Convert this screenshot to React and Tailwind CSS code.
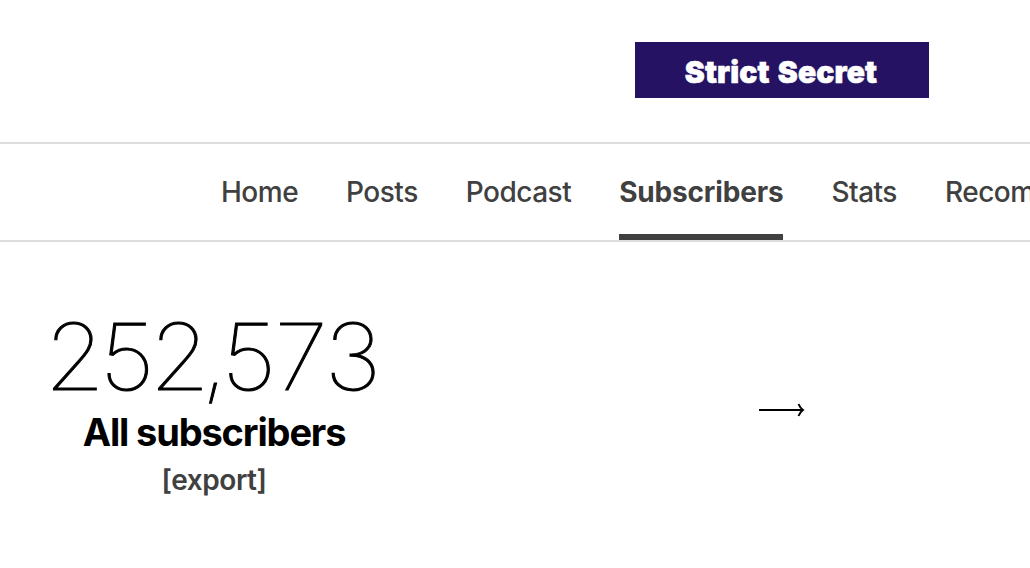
const tabs = [
  { label: 'Home' },
  { label: 'Posts' },
  { label: 'Podcast' },
  { label: 'Subscribers', active: true },
  { label: 'Stats' },
  { label: 'Recommendations' },
];

function Arrow() {
  return (
    <svg className="mt-[82px] ml-[381px] h-4 w-[46px]" viewBox="0 0 46 16" fill="none" stroke="black">
      <path d="M0 8H44" strokeWidth="2.2" />
      <path d="M39.5 2C40.5 4.5 42 6.5 44 8C42 9.5 40.5 11.5 39.5 14" strokeWidth="2" />
    </svg>
  );
}

export default function App() {
  return (
    <div className="h-[568px] w-[1030px] overflow-hidden bg-white font-['Inter',sans-serif]">
      {/* Publication banner */}
      <header className="h-[142px] pt-[42px] pl-[635px]">
        <div className="flex h-14 w-[294px] items-center justify-center bg-[#261263] pt-1 pr-0.5 text-[30px] font-black text-white">
          <span className="whitespace-nowrap tracking-[0.15px] [word-spacing:2px] [-webkit-text-stroke:0.6px_white]">Strict Secret</span>
        </div>
      </header>

      <nav className="flex h-[100px] gap-12 border-y-2 border-[#dddddd] pl-[221px] text-[28px]">
        {tabs.map((tab) => (
          <a
            key={tab.label}
            className={
              tab.active
                ? 'flex h-24 shrink-0 items-center border-b-[6px] border-[#404040] pt-1.5 font-bold tracking-[-0.18px] text-[#404040]'
                : 'flex h-24 shrink-0 items-center font-medium tracking-[-0.5px] text-[#404040]'
            }
          >
            {tab.label}
          </a>
        ))}
      </nav>

      <main className="flex pt-[78px]">
        <section className="ml-[50px] flex w-[328px] flex-col items-center">
          <p className="mr-1 scale-x-[1.06] text-[92px] leading-[74px] font-thin tracking-[-1.8px] whitespace-nowrap text-black [-webkit-text-stroke:1px_black]">
            <span className="tracking-[-5px]">252</span>
            <span className="-ml-[3px] tracking-[-6px]">,</span>573
          </p>
          <h2 className="mt-[15px] text-[38px] leading-[46px] font-bold tracking-[-1.15px] whitespace-nowrap text-black">All subscribers</h2>
          <a className="mt-[5px] text-[28px] leading-10 font-semibold tracking-[-0.45px] text-[#404040]">[export]</a>
        </section>
        <Arrow />
      </main>
    </div>
  );
}
